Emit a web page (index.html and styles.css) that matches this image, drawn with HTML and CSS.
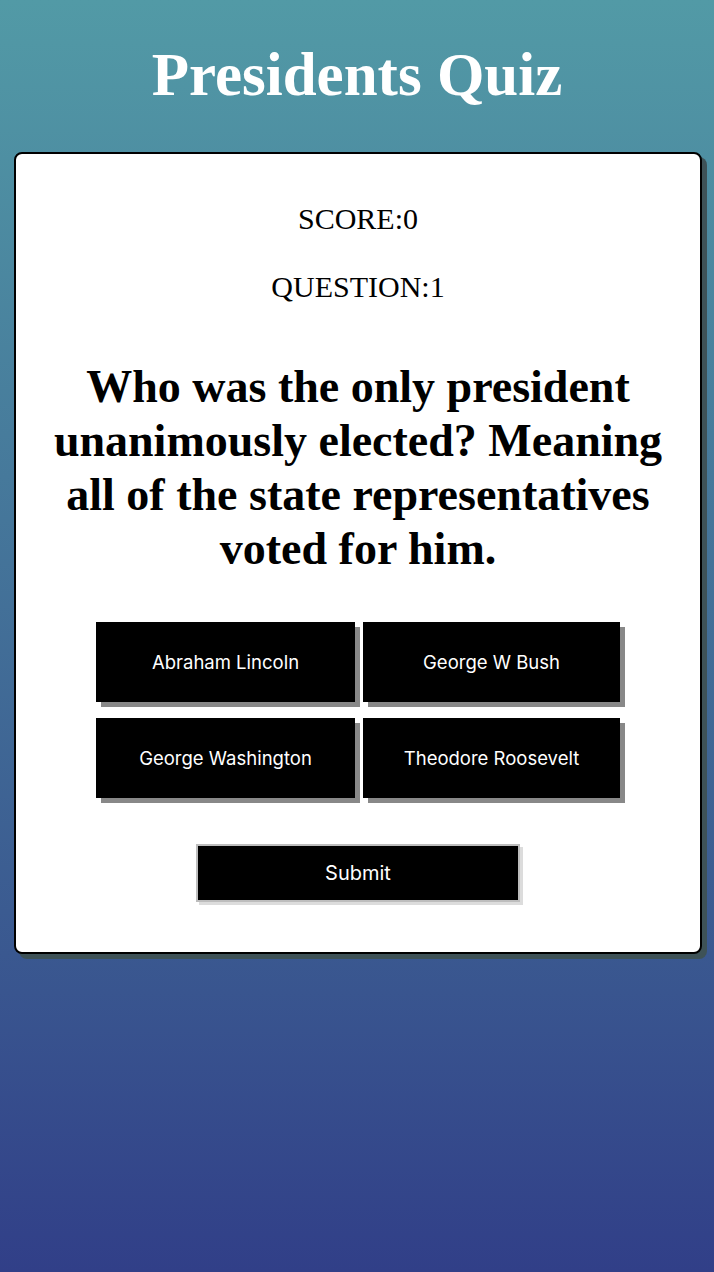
FILE: index.html
```html
<!DOCTYPE html>
<html lang="en">
<head>
<meta charset="utf-8">
<title>Presidents Quiz</title>
<link rel="stylesheet" href="styles.css">
</head>
<body>
<header class="header">
  <h1 class="title">Presidents Quiz</h1>
</header>
<main class="card">
  <p class="stat">SCORE:0</p>
  <p class="stat">QUESTION:1</p>
  <h2 class="question">Who was the only president unanimously elected? Meaning all of the state representatives voted for him.</h2>
  <div class="answers">
    <button class="answer">Abraham Lincoln</button>
    <button class="answer">George W Bush</button>
    <button class="answer">George Washington</button>
    <button class="answer">Theodore Roosevelt</button>
  </div>
  <div class="submit-row">
    <button class="submit">Submit</button>
  </div>
</main>
</body>
</html>
```
FILE: styles.css
```css
html, body {
  margin: 0;
  padding: 0;
}
body {
  min-height: 1272px;
  background: linear-gradient(to bottom, #529aa6 0%, #3a5890 75%, #313f88 100%);
  font-family: "Liberation Serif", "Times New Roman", serif;
}
.header {
  padding: 40px 0 0;
  height: 152px;
  box-sizing: border-box;
}
.title {
  margin: 0;
  text-align: center;
  color: #fff;
  font-size: 61px;
  font-weight: bold;
  line-height: 70px;
}
.card {
  margin: 0 12px 0 14px;
  background: #fff;
  border: 2px solid #000;
  border-radius: 8px;
  box-shadow: 5px 5px 0 #3e5257;
  padding: 48px 30px 50px;
  text-align: center;
}
.stat {
  margin: 0 0 34px;
  font-size: 30px;
  line-height: 34px;
  color: #000;
}
.question {
  margin: 56px 0 46px;
  font-size: 46px;
  line-height: 54px;
  font-weight: bold;
}
.answers {
  display: grid;
  grid-template-columns: 259px 257px;
  column-gap: 8px;
  row-gap: 16px;
  justify-content: center;
}
.answer {
  height: 80px;
  background: #000;
  color: #fff;
  border: none;
  box-shadow: 5px 5px 0 #888;
  font-family: Inter, "Liberation Sans", sans-serif;
  font-size: 18.5px;
  cursor: pointer;
}
.submit-row {
  display: flex;
  justify-content: center;
  margin-top: 46px;
}
.submit {
  width: 324px;
  height: 58px;
  background: #000;
  color: #fff;
  border: 2px solid #bdbdbd;
  box-shadow: 3px 3px 0 #dcdcdc;
  font-family: Inter, "Liberation Sans", sans-serif;
  font-size: 20px;
  cursor: pointer;
}
```
